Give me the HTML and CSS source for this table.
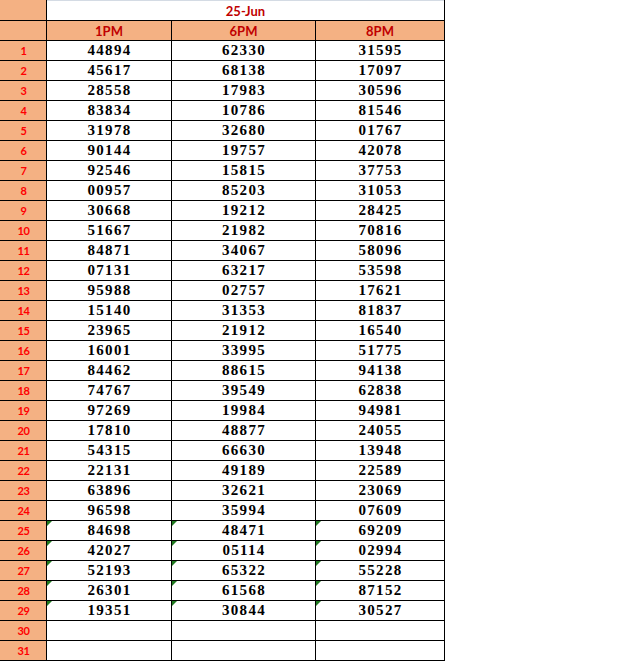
FILE: index.html
```html
<!DOCTYPE html>
<html>
<head>
<meta charset="utf-8">
<link rel="stylesheet" href="styles.css">
</head>
<body>
<div class="sheet">
  <div class="c lab"></div><div class="c date">25-Jun</div>
  <div class="c lab"></div><div class="c hd">1PM</div><div class="c hd">6PM</div><div class="c hd">8PM</div>
  <div class="c lab">1</div><div class="c n">44894</div><div class="c n">62330</div><div class="c n">31595</div>
  <div class="c lab">2</div><div class="c n">45617</div><div class="c n">68138</div><div class="c n">17097</div>
  <div class="c lab">3</div><div class="c n">28558</div><div class="c n">17983</div><div class="c n">30596</div>
  <div class="c lab">4</div><div class="c n">83834</div><div class="c n">10786</div><div class="c n">81546</div>
  <div class="c lab">5</div><div class="c n">31978</div><div class="c n">32680</div><div class="c n">01767</div>
  <div class="c lab">6</div><div class="c n">90144</div><div class="c n">19757</div><div class="c n">42078</div>
  <div class="c lab">7</div><div class="c n">92546</div><div class="c n">15815</div><div class="c n">37753</div>
  <div class="c lab">8</div><div class="c n">00957</div><div class="c n">85203</div><div class="c n">31053</div>
  <div class="c lab">9</div><div class="c n">30668</div><div class="c n">19212</div><div class="c n">28425</div>
  <div class="c lab">10</div><div class="c n">51667</div><div class="c n">21982</div><div class="c n">70816</div>
  <div class="c lab">11</div><div class="c n">84871</div><div class="c n">34067</div><div class="c n">58096</div>
  <div class="c lab">12</div><div class="c n">07131</div><div class="c n">63217</div><div class="c n">53598</div>
  <div class="c lab">13</div><div class="c n">95988</div><div class="c n">02757</div><div class="c n">17621</div>
  <div class="c lab">14</div><div class="c n">15140</div><div class="c n">31353</div><div class="c n">81837</div>
  <div class="c lab">15</div><div class="c n">23965</div><div class="c n">21912</div><div class="c n">16540</div>
  <div class="c lab">16</div><div class="c n">16001</div><div class="c n">33995</div><div class="c n">51775</div>
  <div class="c lab">17</div><div class="c n">84462</div><div class="c n">88615</div><div class="c n">94138</div>
  <div class="c lab">18</div><div class="c n">74767</div><div class="c n">39549</div><div class="c n">62838</div>
  <div class="c lab">19</div><div class="c n">97269</div><div class="c n">19984</div><div class="c n">94981</div>
  <div class="c lab">20</div><div class="c n">17810</div><div class="c n">48877</div><div class="c n">24055</div>
  <div class="c lab">21</div><div class="c n">54315</div><div class="c n">66630</div><div class="c n">13948</div>
  <div class="c lab">22</div><div class="c n">22131</div><div class="c n">49189</div><div class="c n">22589</div>
  <div class="c lab">23</div><div class="c n">63896</div><div class="c n">32621</div><div class="c n">23069</div>
  <div class="c lab">24</div><div class="c n">96598</div><div class="c n">35994</div><div class="c n">07609</div>
  <div class="c lab">25</div><div class="c n t">84698</div><div class="c n t">48471</div><div class="c n t">69209</div>
  <div class="c lab">26</div><div class="c n t">42027</div><div class="c n t">05114</div><div class="c n t">02994</div>
  <div class="c lab">27</div><div class="c n t">52193</div><div class="c n t">65322</div><div class="c n t">55228</div>
  <div class="c lab">28</div><div class="c n t">26301</div><div class="c n t">61568</div><div class="c n t">87152</div>
  <div class="c lab">29</div><div class="c n t">19351</div><div class="c n t">30844</div><div class="c n t">30527</div>
  <div class="c lab">30</div><div class="c n"></div><div class="c n"></div><div class="c n"></div>
  <div class="c lab">31</div><div class="c n"></div><div class="c n"></div><div class="c n"></div>
</div>
</body>
</html>
```
FILE: styles.css
```css
html, body {
  margin: 0;
  padding: 0;
  background: #ffffff;
}
.sheet {
  display: grid;
  width: 444px;
  grid-template-columns: 46px 124px 143px 128px;
  grid-template-rows: 20px;
  grid-auto-rows: 19px;
  gap: 1px;
  padding: 0 1px 1px 0;
  background: #000000;
}
.c {
  position: relative;
  background: #ffffff;
  display: flex;
  align-items: center;
  justify-content: center;
  overflow: hidden;
}
.lab {
  background: #f4b183;
  color: #ff0000;
  font-family: "Lato", "Liberation Sans", sans-serif;
  font-weight: bold;
  font-size: 11px;
  letter-spacing: -0.4px;
  padding-left: 1px;
}
.date {
  grid-column: span 3;
  color: #c00000;
  font-family: "Lato", "Liberation Sans", sans-serif;
  font-weight: bold;
  font-size: 13px;
  border-top: 1px solid #d4dbe4;
  box-sizing: border-box;
}
.hd {
  background: #f4b183;
  color: #c00000;
  font-family: "Lato", "Liberation Sans", sans-serif;
  font-weight: bold;
  font-size: 13px;
}
.n {
  color: #000000;
  font-family: "Liberation Serif", "Times New Roman", serif;
  font-weight: bold;
  font-size: 15px;
  letter-spacing: 1.3px;
  padding-left: 1px;
}
.t::before {
  content: "";
  position: absolute;
  left: 0;
  top: 0;
  border-top: 5px solid #1f7a1f;
  border-right: 5px solid transparent;
}
```
